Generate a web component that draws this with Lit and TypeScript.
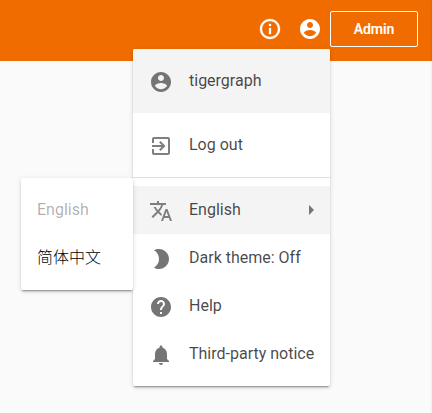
import { LitElement, html, css } from "lit";
import { customElement, property } from "lit/decorators.js";

const ICONS: Record<string, string> = {
  info: "M11 7h2v2h-2zm0 4h2v6h-2zm1-9C6.48 2 2 6.48 2 12s4.48 10 10 10 10-4.48 10-10S17.52 2 12 2zm0 18c-4.41 0-8-3.59-8-8s3.59-8 8-8 8 3.59 8 8-3.59 8-8 8z",
  account: "M12 2C6.48 2 2 6.48 2 12s4.48 10 10 10 10-4.48 10-10S17.52 2 12 2zm0 3c1.66 0 3 1.34 3 3s-1.34 3-3 3-3-1.34-3-3 1.34-3 3-3zm0 14.2c-2.5 0-4.71-1.28-6-3.22.03-1.99 4-3.08 6-3.08 1.99 0 5.97 1.09 6 3.08-1.29 1.94-3.5 3.22-6 3.22z",
  exit: "M10.09 15.59L11.5 17l5-5-5-5-1.41 1.41L12.67 11H3v2h9.67l-2.58 2.59zM19 3H5c-1.11 0-2 .9-2 2v4h2V5h14v14H5v-4H3v4c0 1.1.89 2 2 2h14c1.1 0 2-.9 2-2V5c0-1.1-.9-2-2-2z",
  translate: "M12.87 15.07l-2.54-2.51.03-.03c1.74-1.94 2.98-4.17 3.71-6.53H17V4h-7V2H8v2H1v1.99h11.17C11.5 7.92 10.44 9.75 9 11.35 8.07 10.32 7.3 9.19 6.69 8h-2c.73 1.63 1.73 3.17 2.98 4.56l-5.09 5.02L4 19l5-5 3.11 3.11.76-2.04zM18.5 10h-2L12 22h2l1.12-3h4.75L21 22h2l-4.5-12zm-2.62 7l1.62-4.33L19.12 17h-3.24z",
  moon: "M10 2c-1.82 0-3.53.5-5 1.35C7.99 5.08 10 8.3 10 12s-2.01 6.92-5 8.65C6.47 21.5 8.18 22 10 22c5.52 0 10-4.48 10-10S15.52 2 10 2z",
  help: "M12 2C6.48 2 2 6.48 2 12s4.48 10 10 10 10-4.48 10-10S17.52 2 12 2zm1 17h-2v-2h2v2zm2.07-7.75l-.9.92C13.45 12.9 13 13.5 13 15h-2v-.5c0-1.1.45-2.1 1.17-2.83l1.24-1.26c.37-.36.59-.86.59-1.41 0-1.1-.9-2-2-2s-2 .9-2 2H8c0-2.21 1.79-4 4-4s4 1.79 4 4c0 .88-.36 1.68-.93 2.25z",
  bell: "M12 22c1.1 0 2-.9 2-2h-4c0 1.1.89 2 2 2zm6-6v-5c0-3.07-1.64-5.64-4.5-6.32V4c0-.83-.67-1.5-1.5-1.5s-1.5.67-1.5 1.5v.68C7.63 5.36 6 7.92 6 11v5l-2 2v1h16v-1l-2-2z",
};

@customElement("md-icon")
class MdIcon extends LitElement {
  @property() name = "";
  static styles = css`
    :host { display: block; width: 24px; height: 24px; flex: none; }
    svg { display: block; width: 24px; height: 24px; fill: currentColor; }
    :host([name="info"]) path { stroke: currentColor; stroke-width: 0.3; }
    :host([name="exit"]) svg,
    :host([name="translate"]) svg { opacity: 0.92; }
  `;
  render() {
    return html`<svg viewBox="0 0 24 24"><path d=${ICONS[this.name]}></path></svg>`;
  }
}

@customElement("menu-item")
class MenuItem extends LitElement {
  @property() icon = "";
  @property({ type: Boolean }) submenu = false;
  static styles = css`
    :host {
      display: flex;
      align-items: center;
      height: 48px;
      padding: 0 16px;
      box-sizing: border-box;
      white-space: nowrap;
      color: rgba(0, 0, 0, 0.73);
    }
    :host([tall]) { height: 64px; }
    :host([active]) { background: #f4f4f4; }
    :host([disabled]) { color: rgba(0, 0, 0, 0.32); }
    :host([lang="zh"]) { font-weight: 300; color: #000; }
    md-icon { margin: 2px 16px 0 0; color: #757575; }
    .arrow {
      margin-left: auto;
      border-style: solid;
      border-width: 5px 0 5px 5px;
      border-color: transparent transparent transparent #757575;
    }
  `;
  render() {
    return html`
      ${this.icon ? html`<md-icon name=${this.icon}></md-icon>` : ""}
      <span><slot></slot></span>
      ${this.submenu ? html`<i class="arrow"></i>` : ""}
    `;
  }
}

@customElement("app-root")
class AppRoot extends LitElement {
  static styles = css`
    :host {
      display: block;
      position: relative;
      height: 413px;
      overflow: hidden;
      background: #fafafa;
      box-shadow: inset -2px 0 2px -1px rgba(0, 0, 0, 0.05);
      font: 400 16px/24px Roboto, "Noto Sans CJK SC", sans-serif;
    }
    header {
      display: flex;
      justify-content: flex-end;
      height: 61px;
      box-sizing: border-box;
      padding: 11px 14px 0 0;
      background: #f06c00;
      box-shadow: inset -2px 0 2px -1px rgba(0, 0, 0, 0.05);
      color: #fff;
    }
    header md-icon { margin: 6px 8px 0; }
    button {
      width: 88px;
      height: 36px;
      padding: 0;
      border: 1px solid #fff;
      border-radius: 2px;
      background: none;
      color: #fff;
      font: 500 14px/34px Roboto, sans-serif;
      -webkit-text-stroke: 0.2px #fff;
    }
    .panel {
      position: absolute;
      box-sizing: border-box;
      background: #fff;
      border-radius: 2px;
      overflow: hidden;
      box-shadow: 0 3px 1px -2px rgba(0, 0, 0, 0.2), 0 2px 2px 0 rgba(0, 0, 0, 0.14),
        0 1px 5px 0 rgba(0, 0, 0, 0.12);
    }
    .user { left: 133px; top: 49px; width: 197px; }
    .list { border-top: 1px solid #e0e0e0; padding: 8px 0; }
    .lang { left: 21px; top: 178px; width: 112px; padding: 8px 0; }
  `;
  render() {
    return html`
      <header>
        <md-icon name="info"></md-icon>
        <md-icon name="account"></md-icon>
        <button>Admin</button>
      </header>
      <div class="panel user">
        <menu-item tall active icon="account">tigergraph</menu-item>
        <menu-item tall icon="exit">Log out</menu-item>
        <div class="list">
          <menu-item active submenu icon="translate">English</menu-item>
          <menu-item icon="moon">Dark theme: Off</menu-item>
          <menu-item icon="help">Help</menu-item>
          <menu-item icon="bell">Third-party notice</menu-item>
        </div>
      </div>
      <div class="panel lang">
        <menu-item disabled>English</menu-item>
        <menu-item lang="zh">简体中文</menu-item>
      </div>
    `;
  }
}
